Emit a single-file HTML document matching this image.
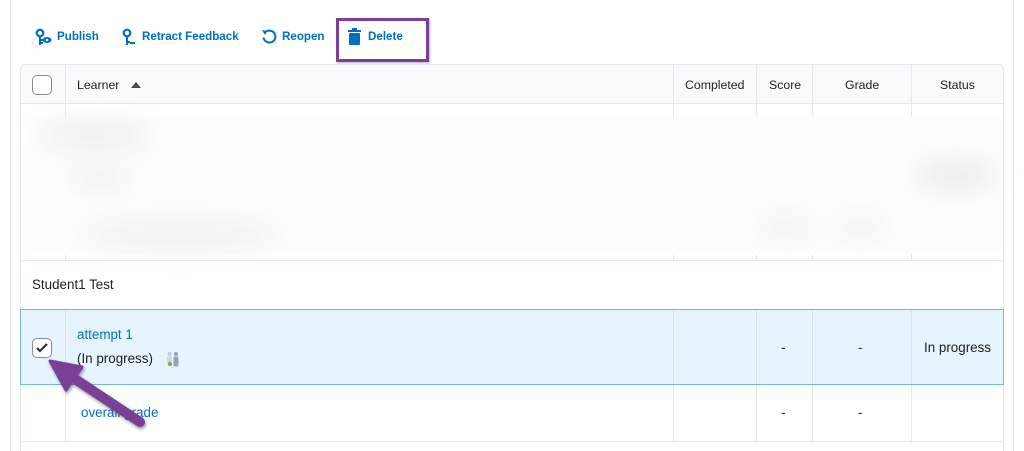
<!DOCTYPE html>
<html><head><style>
*{margin:0;padding:0;box-sizing:border-box}
body{width:1024px;height:451px;background:#fff;font-family:"Liberation Sans",sans-serif;position:relative;overflow:hidden;color:#202122}
.a{position:absolute}
.vl{position:absolute;width:1px;background:#e3e9f1}
.hl{position:absolute;height:1px;background:#e3e9f1}
.tb{position:absolute;top:30px;font-size:11.6px;font-weight:bold;color:#006fbf}
.hd{position:absolute;top:78px;font-size:12.3px;color:#202122}
.bl{position:absolute;border-radius:50%;filter:blur(12px)}
.t{font-size:13.4px}
</style></head><body>
<div class="vl" style="left:10px;top:0;height:451px;background:#e6e6e6"></div>
<div class="vl" style="left:1013px;top:0;height:451px;background:#e6e6e6"></div>

<!-- toolbar -->
<svg class="a" style="left:35px;top:28px" width="20" height="18" viewBox="0 0 20 18"><circle cx="5" cy="5" r="3.3" fill="none" stroke="#006fbf" stroke-width="2.2"/><path d="M5 8v9M5 12h3M5 15h3" stroke="#006fbf" stroke-width="2"/><ellipse cx="12" cy="12" rx="4.5" ry="3" fill="#006fbf"/><circle cx="12" cy="12" r="1.3" fill="#fff"/></svg>
<div class="tb" style="left:57px">Publish</div>
<svg class="a" style="left:121px;top:28px" width="16" height="18" viewBox="0 0 16 18"><circle cx="6" cy="5" r="3.3" fill="none" stroke="#006fbf" stroke-width="2.2"/><path d="M6 8v9M6 14h3M9 15h5" stroke="#006fbf" stroke-width="2"/></svg>
<div class="tb" style="left:142px">Retract Feedback</div>
<svg class="a" style="left:261px;top:28px" width="16" height="17" viewBox="0 0 16 17"><path d="M4 4.5A6 6 0 1 1 2.5 9.5" fill="none" stroke="#006fbf" stroke-width="2"/><path d="M1 2l5 1-2 4z" fill="#006fbf"/></svg>
<div class="tb" style="left:282px">Reopen</div>
<svg class="a" style="left:348px;top:28px" width="13" height="17" viewBox="0 0 13 17"><rect x="4" y="0" width="5" height="2" fill="#006fbf"/><rect x="0" y="2" width="13" height="2" fill="#006fbf"/><rect x="1" y="5" width="11" height="12" rx="1" fill="#006fbf"/></svg>
<div class="tb" style="left:368px">Delete</div>
<div class="a" style="left:336px;top:18px;width:93px;height:44px;border:3px solid #7b3f98;box-shadow:1px 1px 2px rgba(0,0,0,.3)"></div>

<!-- table frame -->
<div class="a" style="left:20px;top:64px;width:984px;height:387px;border:1px solid #dfe6ef;border-bottom:none;border-radius:6px 6px 0 0"></div>
<div class="a" style="left:21px;top:65px;width:982px;height:39px;background:#f8fafc;border-bottom:1px solid #dfe6ef;border-radius:6px 6px 0 0"></div>
<div class="vl" style="left:65px;top:65px;height:39px"></div>
<div class="vl" style="left:673px;top:65px;height:39px"></div>
<div class="vl" style="left:756px;top:65px;height:39px"></div>
<div class="vl" style="left:812px;top:65px;height:39px"></div>
<div class="vl" style="left:911px;top:65px;height:39px"></div>
<div class="a" style="left:32px;top:75px;width:20px;height:20px;border:1px solid #868c8f;border-radius:5px;background:#fff"></div>
<div class="hd" style="left:77px">Learner</div>
<div class="a" style="left:131px;top:82px;width:0;height:0;border-left:5px solid transparent;border-right:5px solid transparent;border-bottom:6px solid #494c4e"></div>
<div class="hd" style="left:685px">Completed</div>
<div class="hd" style="left:769px">Score</div>
<div class="hd" style="left:845px">Grade</div>
<div class="hd" style="left:940px">Status</div>

<!-- blurred area -->
<div class="vl" style="left:65px;top:104px;height:13px"></div>
<div class="vl" style="left:673px;top:104px;height:13px"></div>
<div class="vl" style="left:756px;top:104px;height:13px"></div>
<div class="vl" style="left:812px;top:104px;height:13px"></div>
<div class="vl" style="left:911px;top:104px;height:13px"></div>
<div class="a" style="left:29px;top:117px;width:974px;height:137px;background:#fdfdfd"></div>
<div class="bl" style="left:40px;top:120px;width:110px;height:30px;background:#eeefef"></div>
<div class="bl" style="left:70px;top:165px;width:60px;height:25px;background:#eef1f7"></div>
<div class="bl" style="left:80px;top:220px;width:200px;height:28px;background:#eef0f4"></div>
<div class="bl" style="left:915px;top:160px;width:80px;height:30px;background:#ececec"></div>
<div class="bl" style="left:760px;top:215px;width:50px;height:25px;background:#f1f1f1"></div>
<div class="bl" style="left:835px;top:215px;width:50px;height:25px;background:#f6f0f2"></div>
<div class="vl" style="left:65px;top:254px;height:6px"></div>
<div class="vl" style="left:673px;top:254px;height:6px"></div>
<div class="vl" style="left:756px;top:254px;height:6px"></div>
<div class="vl" style="left:812px;top:254px;height:6px"></div>
<div class="vl" style="left:911px;top:254px;height:6px"></div>
<div class="hl" style="left:21px;top:260px;width:982px;background:#dfe6ef"></div>

<div class="a t" style="left:32px;top:277px">Student1 Test</div>

<!-- selected row -->
<div class="a" style="left:20px;top:309px;width:984px;height:76px;background:#e5f4fd;border:1px solid #71b8e8"></div>
<div class="vl" style="left:65px;top:310px;height:74px;background:#d7e4ee"></div>
<div class="vl" style="left:673px;top:310px;height:74px;background:#d7e4ee"></div>
<div class="vl" style="left:756px;top:310px;height:74px;background:#d7e4ee"></div>
<div class="vl" style="left:812px;top:310px;height:74px;background:#d7e4ee"></div>
<div class="vl" style="left:911px;top:310px;height:74px;background:#d7e4ee"></div>
<div class="a" style="left:32px;top:338px;width:20px;height:20px;border:1px solid #868c8f;border-radius:5px;background:#fff"></div>
<svg class="a" style="left:35px;top:341px" width="14" height="14" viewBox="0 0 14 14"><path d="M2 7l3 3 7-7" fill="none" stroke="#333" stroke-width="2.2"/></svg>
<div class="a t" style="left:77px;top:327px;color:#006fbf">attempt 1</div>
<div class="a t" style="left:77px;top:351px;color:#202122">(In progress)</div>
<svg class="a" style="left:165px;top:351px" width="16" height="16" viewBox="0 0 16 16"><circle cx="4.5" cy="3" r="2" fill="#c4cbd3"/><rect x="2" y="5.5" width="5" height="6" rx="1.5" fill="#d0d6dc"/><circle cx="11" cy="3" r="2" fill="#93a3b3"/><rect x="8.5" y="5.5" width="5" height="10" rx="1.5" fill="#93a3b3"/><circle cx="5" cy="13" r="2.2" fill="#7fb04a"/></svg>
<div class="a t" style="left:781px;top:340px">-</div>
<div class="a t" style="left:858px;top:340px">-</div>
<div class="a t" style="left:924px;top:340px">In progress</div>

<!-- overall grade row -->
<div class="vl" style="left:65px;top:385px;height:56px"></div>
<div class="vl" style="left:673px;top:385px;height:56px"></div>
<div class="vl" style="left:756px;top:385px;height:56px"></div>
<div class="vl" style="left:812px;top:385px;height:56px"></div>
<div class="vl" style="left:911px;top:385px;height:56px"></div>
<div class="hl" style="left:21px;top:441px;width:982px;background:#dfe6ef"></div>
<div class="a t" style="left:81px;top:405px;color:#006fbf">overall grade</div>
<div class="a t" style="left:781px;top:405px">-</div>
<div class="a t" style="left:858px;top:405px">-</div>

<!-- arrow -->
<svg class="a" style="left:0;top:0" width="1024" height="451"><g style="filter:drop-shadow(1px 2px 1.5px rgba(0,0,0,.4))"><path d="M140 422L72 377" stroke="#7b3f98" stroke-width="10" stroke-linecap="round"/><path d="M50 361L82 367L66 390Z" fill="#7b3f98" stroke="#7b3f98" stroke-width="3" stroke-linejoin="round"/></g></svg>
</body></html>
